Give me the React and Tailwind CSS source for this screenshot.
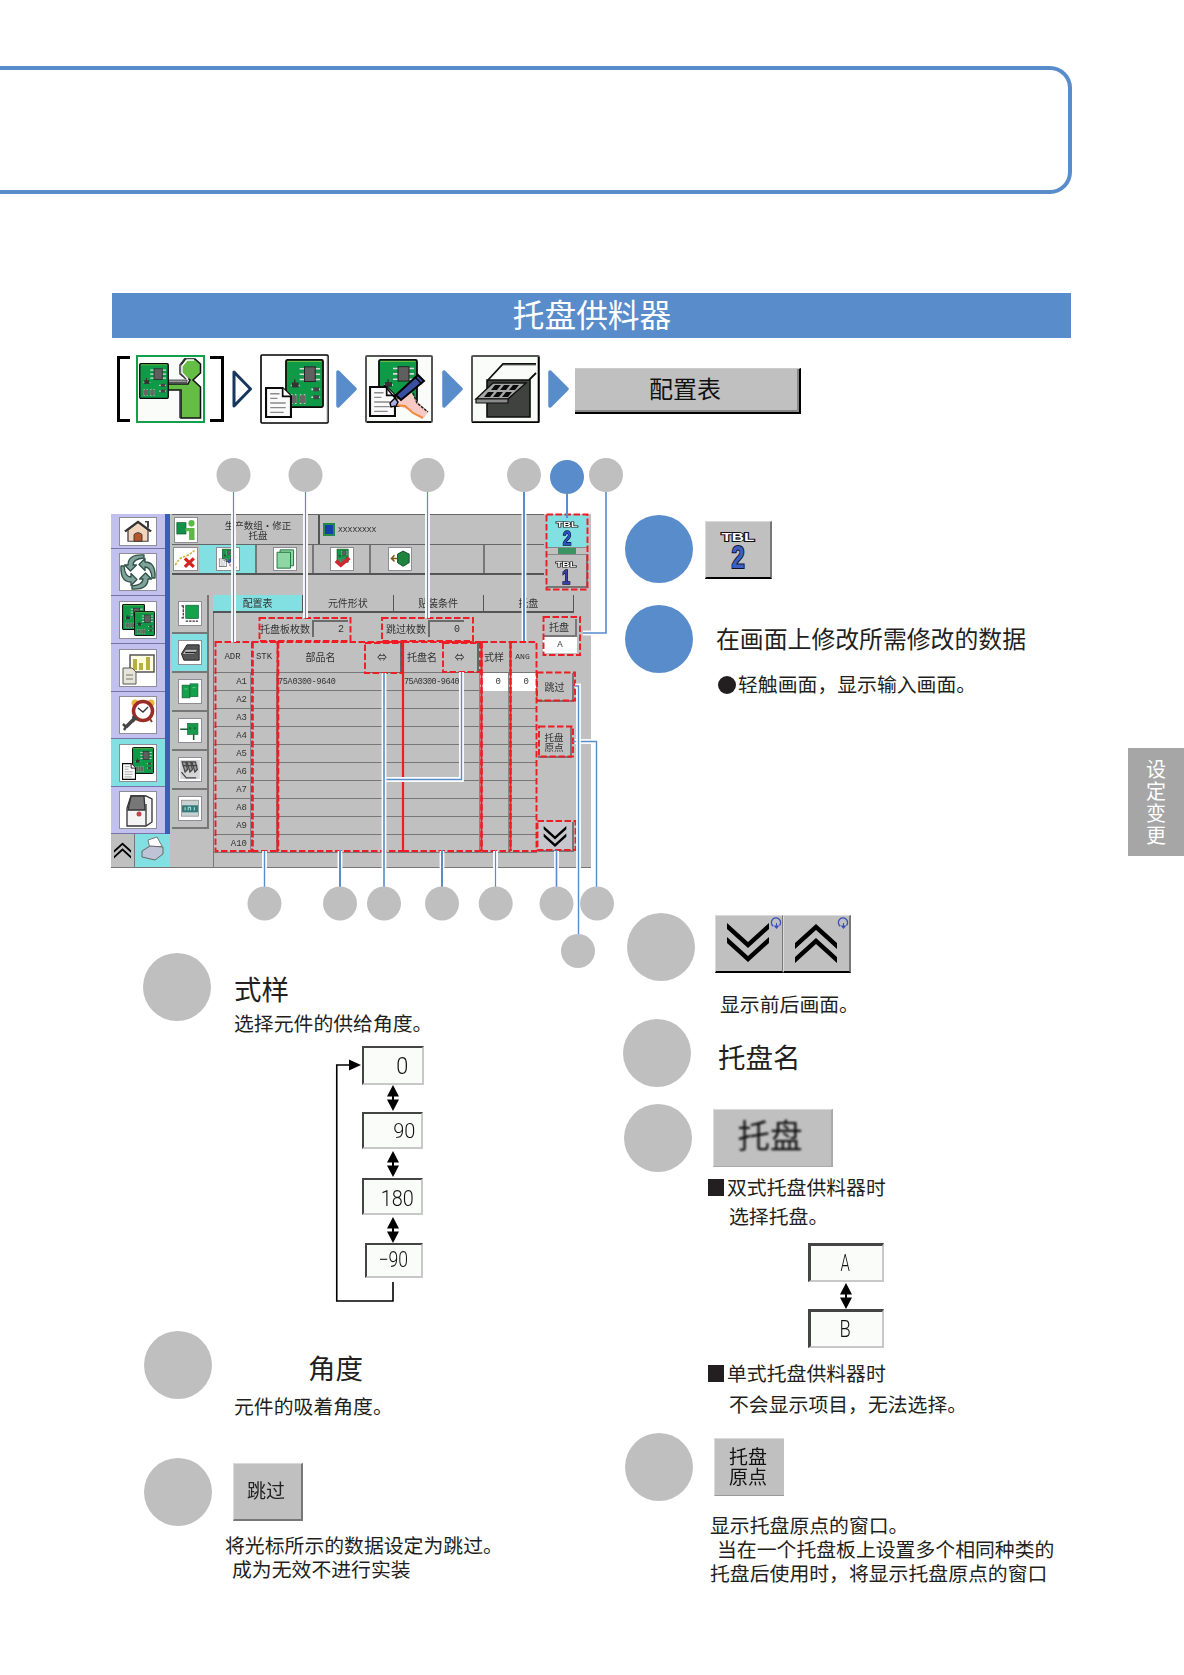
import React from 'react';
import clsx from 'clsx';

const RED = '#ee1c25';
const BLUE = '#588ccb';

/* ---------- icons ---------- */

// Green circuit board, drawn on a 40 x 50 grid
const Board = ({ x = 0, y = 0, w = 40, h = 50 }) => (
  <svg x={x} y={y} width={w} height={h} viewBox="0 0 40 50" preserveAspectRatio="none">
    <rect x="1" y="1" width="38" height="48" rx="1.5" fill="#0f9a48" stroke="#0a0a0a" strokeWidth="1.8" />
    <path d="M2.5 2.5h35" stroke="#7fbf3f" strokeWidth="1" />
    <g stroke="#d9d9d9" strokeWidth="1.6">
      <path d="M15 10h21M15 15.500h21M15 21h21" />
      <path d="M6 27h9M27 31h9M27 39h9" />
      <path d="M7 36v10M11 36v10M16 36v10M20 36v10" />
    </g>
    <rect x="20" y="8" width="11" height="15" fill="#5f5f5f" stroke="#222" />
    <rect x="7" y="24" width="7" height="5" fill="#333" />
    <path d="M10 21v4" stroke="#333" strokeWidth="1.5" />
    <rect x="29" y="29" width="6" height="4" fill="#444" />
    <rect x="29" y="37" width="6" height="4" fill="#444" />
    <rect x="6" y="37" width="6" height="8" fill="#666" />
    <rect x="15" y="37" width="6" height="8" fill="#666" />
  </svg>
);

const Sheet = ({ x = 0, y = 0, w = 26, h = 30 }) => (
  <svg x={x} y={y} width={w} height={h} viewBox="0 0 26 30" preserveAspectRatio="none">
    <path d="M1 1h16l8 8v20H1z" fill="#fafafa" stroke="#0a0a0a" strokeWidth="2" />
    <path d="M17 1v8h8" fill="#fff" stroke="#0a0a0a" strokeWidth="1.6" />
    <path d="M5 6.5h9M5 11h7M5 15.5h15M5 20h15M5 24.5h13" stroke="#8b8b8b" strokeWidth="1.3" />
  </svg>
);

const OperatorIcon = () => (
  <svg viewBox="0 0 69 68" className="h-[68px] w-[69px] shrink-0">
    <rect x="1" y="1" width="67" height="66" fill="#fafcfa" stroke="#12a04c" strokeWidth="2" />
    <path d="M32 25h19v2.500H32z" fill="#9a9a9a" stroke="#333" strokeWidth=".8" />
    <path
      d="M49 4h10l5.500 5v9l-7.500 7 7.500 7v31H45V35H32v-6h20l2-4-8-6V9z"
      fill="#66bd45"
      stroke="#111"
      strokeWidth="1.5"
    />
    <path d="M49 3.500L44 10v9l6 5M44 34v29" fill="none" stroke="#333" strokeWidth="1.5" />
    <path d="M58 5h-7l-5 6v7l6 6" fill="none" stroke="#fff" strokeWidth="1.6" />
    <Board x={3} y={8} w={30} h={36} />
  </svg>
);

const ProgramIcon = () => (
  <svg viewBox="0 0 69 70" className="h-[70px] w-[69px] shrink-0">
    <rect x="1" y="1" width="67" height="68" rx="1" fill="#fff" stroke="#000" strokeWidth="1.6" />
    <path d="M67 2v66" stroke="#bbb" />
    <Board x={25} y={5} w={39} h={49} />
    <Sheet x={5} y={33} w={27} h={31} />
  </svg>
);

const EditIcon = () => (
  <svg viewBox="0 0 68 68" className="h-[68px] w-[68px] shrink-0">
    <rect x="1" y="1" width="66" height="66" rx="1" fill="#fafcfa" stroke="#555" strokeWidth="2" />
    <path d="M2 67h64" stroke="#000" strokeWidth="1.5" />
    <Board x={13} y={4} w={40} h={48} />
    <Sheet x={4} y={31} w={27} h={31} />
    <path d="M30 46l16-9 6 9 11 11-4 6-14-8-15-5z" fill="#f9c9c4" />
    <path d="M29 50l11 1 8 7 10 5" fill="none" stroke="#f08a3c" strokeWidth="2" />
    <path d="M48 38l4 10 11 9" fill="none" stroke="#222" strokeWidth="1.5" strokeDasharray="3 1" />
    <path d="M53 20l6 6-23 19-5-5z" fill="#3a4fa2" stroke="#000" strokeWidth="2" />
    <path d="M50 22l7 7" stroke="#000" strokeWidth="1.5" />
    <path d="M30 43l3 4-2 4-5 1-1-4z" fill="#a9aede" stroke="#000" strokeWidth="1.4" />
    <path d="M19 30l11 13" stroke="#000" strokeWidth="1.4" />
  </svg>
);

const TrayIcon = () => (
  <svg viewBox="0 0 69 68" className="h-[68px] w-[69px] shrink-0">
    <rect x="1" y="1" width="67" height="66" rx="1" fill="#fafcfa" stroke="#555" strokeWidth="2" />
    <path d="M67.5 2v65.5H1" fill="none" stroke="#000" strokeWidth="1.6" />
    <path d="M17 25l15-16h33M58 25l7-7" fill="none" stroke="#111" strokeWidth="1.8" />
    <path d="M32 10h33" stroke="#777" strokeWidth="1" />
    <path d="M16 25h43v37H16z" fill="#3f423f" stroke="#0d0d0d" strokeWidth="1.6" />
    <path d="M22 28h33L37 44H5z" fill="#a7a7a7" stroke="#111" strokeWidth="1.4" />
    <path d="M5 44h32v4H5z" fill="#8a8a8a" stroke="#111" strokeWidth="1.2" />
    <g fill="#0a0a0a">
      <path d="M24 30h6l-4 5h-6zM33 30h6l-4 5h-6zM42 30h6l-4 5h-6z" />
      <path d="M17 37h6l-4 5h-6zM26 37h6l-4 5h-6zM35 37h6l-4 5h-6z" />
    </g>
  </svg>
);

const PathArrow = ({ outline }) => (
  <svg viewBox="0 0 21 38" className="h-[38px] w-[21px] shrink-0">
    {outline ? (
      <path d="M2 2v34L18.500 19z" fill="#fff" stroke="#17375e" strokeWidth="3" strokeLinejoin="round" />
    ) : (
      <path d="M2 2v34L19 19z" fill={BLUE} stroke={BLUE} strokeWidth="3.500" strokeLinejoin="round" />
    )}
  </svg>
);

const Chevrons = ({ up, className }) => (
  <svg viewBox="0 0 42 39" className={clsx(className, up && 'rotate-180')}>
    <path d="M0 0l21 19L42 0v6L21 25 0 6z" fill="#000" />
    <path d="M0 14l21 19L42 14v6L21 39 0 20z" fill="#000" />
  </svg>
);

const UpDown = () => (
  <svg viewBox="0 0 12 26" className="h-[26px] w-[12px]">
    <path d="M6 0l6 11.500H0zM6 26l6-11.500H0z" fill="#000" />
    <path d="M6 8v10" stroke="#000" strokeWidth="2" />
  </svg>
);

const TblLabel = ({ n, className, color = '#3f5fc0' }) => (
  <svg viewBox="0 0 68 58" className={className}>
    <text x="34" y="19" textAnchor="middle" textLength="35" lengthAdjust="spacingAndGlyphs" fontFamily="Liberation Sans, sans-serif" fontWeight="700" fontSize="12.500" fill="#fff" stroke="#111" strokeWidth="2" paintOrder="stroke">
      TBL
    </text>
    <text x="34" y="48" textAnchor="middle" textLength="14" lengthAdjust="spacingAndGlyphs" fontFamily="Liberation Sans, sans-serif" fontWeight="700" fontSize="33" fill={color} stroke="#0b1230" strokeWidth="2.200" paintOrder="stroke">
      {n}
    </text>
  </svg>
);

/* ---------- small machine-screen icons ---------- */

const HomeGlyph = () => (
  <g>
    <path d="M8 16v15h20V16L18 6z" fill="#f2d5bf" stroke="#444" strokeWidth="1.3" />
    <path d="M25 5h3v8" stroke="#444" strokeWidth="2" fill="none" />
    <path d="M5 18L18 5l13 13" fill="none" stroke="#333" strokeWidth="2.500" />
    <path d="M14 31v-9q4-5 8 0v9z" fill="#b5562c" stroke="#333" />
  </g>
);

const CycleGlyph = () => (
  <g fill="#7fa39a" stroke="#2f5049" strokeWidth="1.3" strokeLinejoin="round">
    {[0, 90, 180, 270].map((a) => (
      <path key={a} d="M24 1Q8 0 8 11H4.500l6 6 6-6H13Q13 5 24 4z" transform={`rotate(${a} 18 18)`} />
    ))}
  </g>
);

const BoardsGlyph = () => (
  <g>
    <Board x={2} y={2} w={23} h={26} />
    <Board x={14} y={9} w={21} h={25} />
  </g>
);

const ChartGlyph = () => (
  <g>
    <path d="M10 5h24v17H10z" fill="#fffce0" stroke="#555" strokeWidth="1.500" />
    <path d="M15 20V9M21 20v-7M28 20V7" stroke="#b7b040" strokeWidth="4" />
    <path d="M3 18h9l4 4v12H3z" fill="#e6e6d8" stroke="#555" />
    <path d="M6 25h7M6 29h7" stroke="#777" />
  </g>
);

const ClockGlyph = () => (
  <g>
    <circle cx="15" cy="6" r="3.500" fill="#e6b93c" />
    <circle cx="31" cy="6" r="3.500" fill="#e6b93c" />
    <circle cx="23" cy="14" r="9.500" fill="#fff" stroke="#9c2c26" strokeWidth="3.500" />
    <path d="M18 11l5 4 5-5" fill="none" stroke="#333" strokeWidth="1.400" />
    <path d="M30 22l2 3M15 22l-2 3" stroke="#9c2c26" strokeWidth="2" />
    <path d="M14 22L6 30" stroke="#444" strokeWidth="3.500" />
    <path d="M3 27l3 3-2 3M13 19l1 3 4 0" fill="none" stroke="#444" strokeWidth="2.500" />
  </g>
);

const DataGlyph = () => (
  <g>
    <Board x={12} y={2} w={22} h={27} />
    <Sheet x={2} y={18} w={14} h={17} />
  </g>
);

const MachineGlyph = () => (
  <g fill="#f4f4f4" stroke="#333" strokeWidth="1.300">
    <path d="M11 4h15l6 3v23l-6 4H7V16z" />
    <path d="M11 4h13l1 14H8z" fill="#777" />
    <path d="M26 12v21" />
    <circle cx="19" cy="22" r="2.500" fill="#c2454d" stroke="none" />
  </g>
);

const BoardSizeGlyph = () => (
  <g>
    <rect x="11" y="5" width="21" height="21" fill="#15a04c" stroke="#145c33" />
    <path d="M7 6v19M11 30h20M4 6h5M4 25h5" stroke="#333" strokeWidth="2" strokeDasharray="4 1.500" />
  </g>
);

const PairGlyph = () => (
  <g fill="#15a04c" stroke="#145c33">
    <rect x="5" y="8" width="13" height="20" />
    <rect x="18" y="6" width="13" height="20" />
    <path d="M9 14h5M22 12h5" stroke="#9be0b0" />
  </g>
);

const TrayGlyph = () => (
  <g>
    <path d="M4 20L13 6h20v24H8z" fill="#555" stroke="#222" strokeWidth="1.500" />
    <path d="M5 21l6-8h20l-6 8z" fill="#bbb" stroke="#222" />
    <path d="M10 18h17" stroke="#222" strokeWidth="2" />
  </g>
);

const PinGlyph = () => (
  <g>
    <rect x="14" y="7" width="17" height="17" fill="#169a49" stroke="#145c33" />
    <path d="M2 16h13M24 24v9M18 13v3M26 13v3" stroke="#145c33" strokeWidth="2.500" />
  </g>
);

const FeederGlyph = () => (
  <g fill="none" stroke="#444" strokeWidth="2">
    <rect x="2" y="3" width="32" height="30" fill="#d5d5d5" stroke="none" />
    <path d="M5 6h6l3 12-4 4zM13 6h6l3 12-4 4zM21 6h6l3 12-4 4z" fill="#999" />
    <path d="M4 22l8 9h16M6 12h24" />
  </g>
);

const MeterGlyph = () => (
  <g>
    <rect x="4" y="5" width="28" height="25" fill="#c9d2d2" stroke="#777" />
    <rect x="5" y="13" width="26" height="11" fill="#327a7a" />
    <path d="M10 21v-5M15 21v-5h4v5M25 16v5" stroke="#bdf1ef" strokeWidth="1.500" fill="none" />
  </g>
);

const UserGlyph = () => (
  <g>
    <rect x="3" y="7" width="15" height="17" fill="#13904a" stroke="#0c4f2a" />
    <circle cx="27" cy="8" r="5" fill="#5cb848" />
    <path d="M17 15h15v18h-9V20h-6z" fill="#5cb848" />
  </g>
);

const DeleteGlyph = () => (
  <g>
    <path d="M2 28q6-12 14-14T32 4" fill="none" stroke="#c9b03e" strokeWidth="2.500" strokeDasharray="4 2" />
    <path d="M17 17l14 14M31 17L17 31" stroke="#d32424" strokeWidth="5" />
  </g>
);

const EditGlyph = () => (
  <g>
    <Board x={8} y={1} w={18} h={22} />
    <Sheet x={3} y={17} w={13} h={14} />
    <path d="M18 24l12-10" stroke="#3a4fa2" strokeWidth="5" />
    <path d="M20 27l12 6" stroke="#d8a090" strokeWidth="4" />
  </g>
);

const PagesGlyph = () => (
  <g fill="#8fd6a5" stroke="#23763f" strokeWidth="1.600">
    <path d="M10 3h22v26H10z" />
    <path d="M5 7h22v26H5z" />
  </g>
);

const CheckGlyph = () => (
  <g>
    <Board x={9} y={1} w={20} h={23} />
    <path d="M8 21l8 7 14-12" fill="none" stroke="#cf2630" strokeWidth="6" />
  </g>
);

const OutputGlyph = () => (
  <g>
    <path d="M14 10l9-5 10 5v14l-10 6-9-6z" fill="#1f8340" stroke="#114a25" strokeWidth="1.500" />
    <path d="M14 17H4M9 12l-5 5 5 5" fill="none" stroke="#7b5a1c" strokeWidth="2.500" />
  </g>
);

const Tile = ({ children, className }) => (
  <div className={clsx('shrink-0 border border-[#8d8d93] bg-white', className)}>
    <svg viewBox="0 0 36 36" preserveAspectRatio="none" className="h-full w-full">
      {children}
    </svg>
  </div>
);

/* ---------- machine screen ---------- */

const MENU = [
  { glyph: <HomeGlyph />, h: 'h-[35px]', tile: 'h-[29px]' },
  { glyph: <CycleGlyph />, h: 'h-[47px]', tile: 'h-[38px]' },
  { glyph: <BoardsGlyph />, h: 'h-[48px]', tile: 'h-[38px]' },
  { glyph: <ChartGlyph />, h: 'h-[48px]', tile: 'h-[38px]' },
  { glyph: <ClockGlyph />, h: 'h-[47px]', tile: 'h-[38px]' },
  { glyph: <DataGlyph />, h: 'h-[48px]', tile: 'h-[38px]', active: true },
  { glyph: <MachineGlyph />, h: 'h-[47px]', tile: 'h-[38px]' },
];

const SUBMENU = [
  { glyph: <BoardSizeGlyph /> },
  { glyph: <TrayGlyph />, active: true },
  { glyph: <PairGlyph /> },
  { glyph: <PinGlyph /> },
  { glyph: <FeederGlyph /> },
  { glyph: <MeterGlyph /> },
];

const TOOLS = [
  { glyph: <EditGlyph />, active: true, w: 'w-[57px]' },
  { glyph: <PagesGlyph />, w: 'w-[57px]' },
  { glyph: <CheckGlyph />, w: 'w-[57px]' },
  { glyph: <OutputGlyph />, w: 'w-[114px]', pad: 'pr-[54px]' },
];

const TABS = ['配置表', '元件形状', '贴装条件', '托盘'];
const ROWS = ['A1', 'A2', 'A3', 'A4', 'A5', 'A6', 'A7', 'A8', 'A9', 'A10'];
const COLS = 'grid grid-cols-[37px_26px_87px_38px_40px_37px_30px_27px]';

const CountField = ({ label, value }) => (
  <div className="flex h-[20px] items-center">
    <span className="whitespace-nowrap">{label}</span>
    <span className="ml-[2px] h-[17px] w-[36px] border-t-2 border-l-2 border-[#6b6b6b] pr-[4px] text-right font-['Liberation_Mono',monospace] leading-[16px]">
      {value}
    </span>
  </div>
);

const MachineScreen = () => (
  <div className="flex h-[354px] w-[480px] overflow-hidden border-b border-[#777] bg-[#c0c0c0] font-['Noto_Sans_CJK_SC',sans-serif] text-[10px] text-[#333] blur-[0.6px]">
    <div className="flex w-[59px] flex-col">
      <div className="flex flex-col border-r-[5px] border-[#3b5cb8] bg-[#c1c0ef]">
        {MENU.map((m, i) => (
          <div key={i} className={clsx('flex items-center justify-center border-b border-[#7674a8]', m.h, m.active && 'bg-[#83e0e2]')}>
            <Tile className={clsx('w-[38px]', m.tile)}>{m.glyph}</Tile>
          </div>
        ))}
      </div>
      <div className="flex flex-1 bg-[#83e0e2]">
        <div className="flex w-[24px] items-center justify-center border-r border-[#777] bg-[#c0c0c0]">
          <Chevrons up className="h-[17px] w-[17px]" />
        </div>
        <svg viewBox="0 0 34 32" className="h-[32px] w-[34px]">
          <path d="M13 6l9-3 5 9-12 3z" fill="#fff" stroke="#777" />
          <path d="M7 17l8-5 13 1v7l-8 6-13-3z" fill="#bfc3d6" stroke="#666" />
        </svg>
      </div>
    </div>

    <div className="ml-[2px] flex w-[419px] flex-col">
      <div className="flex h-[61px]">
        <div className="flex w-[372px] flex-col border-b-2 border-[#555]">
          <div className="flex h-[31px] border-t border-b border-[#666]">
            <Tile className="mt-[2px] ml-[2px] h-[26px] w-[24px]"><UserGlyph /></Tile>
            <div className="flex w-[122px] flex-col items-center justify-center border-r-2 border-[#555] text-[9.500px] leading-[10px]">
              <span>生产数组·修正</span>
              <span>托盘</span>
            </div>
            <div className="flex items-center gap-[3px] pl-[3px]">
              <span className="h-[13px] w-[12px] border-2 border-[#25884d] bg-[#173fa8]" />
              <span className="font-['Liberation_Mono',monospace] text-[8px]">XXXXXXXX</span>
            </div>
          </div>
          <div className="flex flex-1">
            <Tile className="mt-[2px] ml-[1px] h-[24px] w-[25px]"><DeleteGlyph /></Tile>
            <div className="ml-[2px] flex">
              {TOOLS.map((t, i) => (
                <div key={i} className={clsx('flex items-center justify-center border-r-2 border-[#777]', t.w, t.pad, t.active && 'bg-[#83e0e2]')}>
                  <Tile className="h-[24px] w-[24px]">{t.glyph}</Tile>
                </div>
              ))}
            </div>
          </div>
        </div>
        <div className="ml-[2px] flex w-[42px] flex-col pt-[1px]">
          <div className="flex h-[32px] justify-center bg-[#83e0e2]">
            <TblLabel n="2" color="#2b53c0" className="h-[36px] w-[42px]" />
          </div>
          <div className="flex h-[10px] items-center justify-center border-y border-[#888]">
            <span className="h-[6px] w-[18px] bg-[#3a9361]" />
          </div>
          <div className="flex h-[33px] shrink-0 justify-center border-r-2 border-b-2 border-[#777]">
            <TblLabel n="1" color="#3b3fa8" className="h-[36px] w-[42px]" />
          </div>
        </div>
      </div>

      <div className="mt-[20px] flex flex-1">
        <div className="flex w-[37px] flex-col">
          {SUBMENU.map((s, i) => (
            <div key={i} className={clsx('flex h-[39px] items-center justify-center border-r-2 border-b-2 border-[#777]', s.active && 'bg-[#83e0e2]')}>
              <Tile className="h-[25px] w-[24px]">{s.glyph}</Tile>
            </div>
          ))}
        </div>
        <div className="ml-[4px] flex flex-col">
          <div className="flex h-[18px] w-[361px]">
            {TABS.map((t, i) => (
              <div key={t} className={clsx('flex-1 border-r border-b-2 border-[#555] text-center leading-[16px]', i === 0 && 'border-b-0 bg-[#83e0e2]')}>
                {t}
              </div>
            ))}
          </div>
          <div className="flex flex-1 border-l border-[#777]">
            <div className="flex w-[323px] flex-col">
              <div className="flex h-[29px] items-center gap-[38px] pt-[2px] pl-[46px]">
                <CountField label="托盘板枚数" value="2" />
                <CountField label="跳过枚数" value="0" />
              </div>
              <div className={clsx(COLS, 'h-[31px] border-b border-[#777] text-center leading-[30px]')}>
                <span className="font-['Liberation_Mono',monospace] text-[9px]">ADR</span>
                <span className="font-['Liberation_Mono',monospace] text-[9px]">STK</span>
                <span>部品名</span>
                <span className="border-r-2 border-b border-[#666]">⇔</span>
                <span>托盘名</span>
                <span className="border-r-2 border-b border-[#666]">⇔</span>
                <span>式样</span>
                <span className="font-['Liberation_Mono',monospace] text-[8px]">ANG</span>
              </div>
              {ROWS.map((r, i) => (
                <div key={r} className={clsx(COLS, "h-[18px] border-b border-[#777] font-['Liberation_Mono',monospace] text-[9px] leading-[18px]")}>
                  <span className="border-r border-[#888] pr-[3px] text-right">{r}</span>
                  <span className="border-r border-[#888]" />
                  <span className="col-span-2 pl-[1px] text-[8.500px] tracking-[-0.3px]">{i === 0 && '75A0300-9640'}</span>
                  <span className="col-span-2 pl-[2px] text-[8.500px] tracking-[-0.5px] whitespace-nowrap">{i === 0 && '75A0300-9640'}</span>
                  <span className={clsx('border-x border-[#888] pr-[7px] text-right', i === 0 && 'bg-white')}>{i === 0 && '0'}</span>
                  <span className={clsx('pr-[7px] text-right', i === 0 && 'bg-white')}>{i === 0 && '0'}</span>
                </div>
              ))}
            </div>
            <div className="flex w-[42px] flex-col items-start">
              <div className="mt-[6px] ml-[6px] h-[18px] w-[34px] border-r-2 border-b-2 border-[#777] text-center leading-[16px]">托盘</div>
              <div className="ml-[6px] h-[16px] w-[34px] bg-white text-center font-['Liberation_Mono',monospace] text-[9px] leading-[16px]">A</div>
              <div className="mt-[20px] h-[29px] w-[37px] border-r-2 border-b-2 border-[#777] text-center leading-[27px]">跳过</div>
              <div className="mt-[25px] ml-[1px] flex h-[31px] w-[34px] flex-col justify-center border-r-2 border-b-2 border-[#777] text-center text-[9.500px] leading-[10px]">
                <span>托盘</span>
                <span>原点</span>
              </div>
              <div className="mt-[64px] ml-[1px] flex h-[30px] w-[36px] items-center justify-center border-r-2 border-b-2 border-[#777] bg-[#c6c6cc]">
                <Chevrons className="h-[21px] w-[24px]" />
              </div>
            </div>
          </div>
        </div>
      </div>
    </div>
  </div>
);

/* ---------- callouts over the machine screen ---------- */

// Marker bubbles, in page coordinates
const MARKERS = [
  [233.5, 475], [305.5, 475], [427.5, 475], [524, 475], [606, 475],
  [264.5, 903.5], [340, 903.5], [384, 903.5], [442, 903.5], [495.7, 903.5], [556.5, 903.5], [597, 903.5],
  [578, 951],
];

const LEADERS = [
  { d: 'M233.5 492V642', halo: 'M233.5 514V642', w: 1.2 },
  { d: 'M305.5 492V618', halo: 'M305.5 514V618', w: 1.2 },
  { d: 'M427.5 492V618', halo: 'M427.5 514V618', w: 1.2 },
  { d: 'M524 492V641', halo: 'M524 514V641', w: 2 },
  { d: 'M567 494V518', w: 2 },
  { d: 'M606 492V633H583', halo: 'M591 633H583', w: 1.6 },
  { d: 'M461.5 672V779.500H384', halo: 'M461.5 672V779.500H384', w: 1.4 },
  { d: 'M384 673V887', halo: 'M384 673V868', w: 1.6 },
  { d: 'M264.5 851V887', halo: 'M264.5 851V868', w: 1.4 },
  { d: 'M340 850V887', halo: 'M340 851V868', w: 2 },
  { d: 'M442 850V887', halo: 'M442 851V868', w: 2 },
  { d: 'M495.5 850V887', halo: 'M495.5 851V868', w: 1.2 },
  { d: 'M556.500 850V887', halo: 'M556.500 851V868', w: 1.6 },
  { d: 'M573 741.500H596.500V887', halo: 'M575 741.500H591', w: 1.4 },
  { d: 'M575 686H578.500V934', halo: 'M575 686H578.500V868', w: 1.4 },
];

const FRAMES = [
  [259.5, 618, 91, 23],
  [382, 618, 91, 23],
  [215.500, 642, 36.500, 209],
  [277.500, 642, 125.500, 209],
  [403, 642, 78.500, 209],
  [510.500, 642, 26, 209],
  [365, 643, 37, 30],
  [443, 643, 37, 29],
  [546.5, 514.5, 41, 75],
  [543.5, 617, 36.5, 38],
  [537, 672.500, 38, 28],
  [539, 726.500, 34, 30],
  [537.500, 821, 38, 29],
];

const Callouts = () => (
  <svg viewBox="0 424 624 546" className="absolute top-0 left-0 h-[546px] w-[624px]" fill="none">
    <g stroke={RED} strokeWidth="1.9" strokeDasharray="6.500 2.500">
      {FRAMES.map(([x, y, w, h], i) => (
        <rect key={i} x={x} y={y} width={w} height={h} />
      ))}
      <path d="M252 642H277.500M252 851H277.500M481.500 642H510.500M481.500 851H510.500" />
      <path d="M252.500 642V851M278 642V851M481.500 642V851M510.500 642V851" strokeWidth="2.600" />
    </g>
    <path d="M403 642V851" stroke={RED} strokeWidth="2.200" />
    {LEADERS.map((l) => (
      <g key={l.d}>
        {l.halo && <path d={l.halo} stroke="#fff" strokeWidth="4.800" />}
        <path d={l.d} stroke={BLUE} strokeWidth={l.w} />
      </g>
    ))}
    {MARKERS.map(([x, y]) => (
      <circle key={`${x}-${y}`} cx={x} cy={y} r="17" fill="#bfbfbf" />
    ))}
    <circle cx="567" cy="477" r="17" fill={BLUE} />
  </svg>
);

/* ---------- page parts ---------- */

const Dot = ({ blue, className }) => (
  <div className={clsx('h-[68px] w-[68px] shrink-0 rounded-full', blue ? 'bg-[#588ccb]' : 'bg-[#bfbfbf]', className)} />
);

const Heading = ({ children, className }) => (
  <h3 className={clsx('h-[28px] text-[27.500px] leading-[28px] whitespace-nowrap', className)}>{children}</h3>
);

const Line = ({ children, className }) => (
  <p className={clsx('h-[20px] text-[19.850px] leading-[20px] whitespace-pre', className)}>{children}</p>
);

const ValueBox = ({ children, className }) => (
  <div
    className={clsx(
      "flex items-center border-t-2 border-r-2 border-b-2 border-l-2 border-t-[#444] border-r-[#c8c8c8] border-b-[#c8c8c8] border-l-[#444] bg-[#fafcfa] font-['Roboto',sans-serif] font-light text-[#111]",
      className
    )}
  >
    {children}
  </div>
);

const KeyButton = ({ children, className }) => (
  <div className={clsx('flex h-[58px] items-center justify-center border-t border-l border-[#dadada] bg-[#c0c0c0]', className)}>{children}</div>
);

const AngleCycle = () => (
  <div className="relative ml-[103px] flex h-[258px] w-[90px] flex-col">
    <svg viewBox="0 0 90 258" className="absolute inset-0 h-[258px] w-[90px] overflow-visible">
      <path d="M56 236v19H-0.250V19H14" fill="none" stroke="#000" strokeWidth="1.600" />
      <path d="M12 13.500v11L24 19z" fill="#000" />
    </svg>
    <ValueBox className="ml-[25px] h-[39px] w-[62px] justify-end pr-[14px] text-[24px]">
      <span className="origin-right scale-x-90">0</span>
    </ValueBox>
    <div className="ml-[50px]"><UpDown /></div>
    <ValueBox className="mt-[1px] ml-[25px] h-[37px] w-[61px] justify-end pt-[3px] pr-[6px] text-[21px]">
      <span className="origin-right scale-x-95">90</span>
    </ValueBox>
    <div className="mt-[2px] ml-[50px]"><UpDown /></div>
    <ValueBox className="mt-[1px] ml-[25px] h-[37px] w-[61px] justify-end pt-[3px] pr-[7px] text-[22px]">
      <span className="origin-right scale-x-90">180</span>
    </ValueBox>
    <div className="mt-[2px] ml-[50px]"><UpDown /></div>
    <ValueBox className="ml-[28px] h-[35px] w-[58px] justify-end pr-[13px] pb-[2px] text-[22px]">
      <span className="origin-right scale-x-[0.8]">−90</span>
    </ValueBox>
  </div>
);

const LoopMark = () => (
  <svg viewBox="0 0 12 14" className="absolute top-[1px] right-0 h-[14px] w-[12px]">
    <path d="M3.200 9.200A4.600 4.600 0 1 1 9.500 8.500" fill="none" stroke="#3a50b4" strokeWidth="1.300" />
    <path d="M3.500 8.500h6L6.500 12z" fill="#3a50b4" />
    <path d="M6.500 6v4" stroke="#3a50b4" />
  </svg>
);

export default function App() {
  return (
    <div className="h-[1675px] w-[1184px] overflow-hidden bg-white pt-[66px] font-['Noto_Sans_CJK_SC',sans-serif] text-[#231f20]">
      <header className="h-[128px] w-[1072px] rounded-r-[22px] border-4 border-l-0 border-[#588ccb]" />

      <h2 className="mt-[99px] ml-[112px] flex h-[45px] w-[959px] items-center justify-center bg-[#588ccb] pb-[3px] pl-[1px] text-[31.700px] leading-none text-white">
        托盘供料器
      </h2>

      {/* Button path to reach the screen */}
      <nav className="mt-[16px] flex h-[70px] items-center pl-[117px]">
        <span className="h-[66px] w-[13px] border-[3px] border-r-0 border-black" />
        <div className="ml-[6px]"><OperatorIcon /></div>
        <span className="ml-[5px] h-[66px] w-[14px] border-[3px] border-l-0 border-black" />
        <div className="ml-[8px]"><PathArrow outline /></div>
        <div className="ml-[7px]"><ProgramIcon /></div>
        <div className="ml-[7px]"><PathArrow /></div>
        <div className="ml-[8px]"><EditIcon /></div>
        <div className="ml-[9px]"><PathArrow /></div>
        <div className="ml-[8px]"><TrayIcon /></div>
        <div className="ml-[8px]"><PathArrow /></div>
        <div className="mt-[4px] ml-[6px] flex h-[46px] w-[226px] items-center justify-center border-t border-r-2 border-b-2 border-t-[#ccc] border-r-black border-b-black bg-[#c0c0c0] pr-[4px] pb-[6px] text-[24px] leading-none text-[#111] shadow-[inset_-2px_-2px_0_#888]">
          配置表
        </div>
      </nav>

      <main className="flex">
        <div className="flex w-[624px] flex-col">
          <div className="relative h-[529px] pt-[90px] pl-[111px]">
            <MachineScreen />
            <Callouts />
          </div>

          <section className="flex h-[378px] pl-[143px]">
            <Dot />
            <div className="ml-[23px] pt-[21px]">
              <Heading>式样</Heading>
              <Line className="mt-[11px]">选择元件的供给角度。</Line>
              <div className="mt-[13px]">
                <AngleCycle />
              </div>
            </div>
          </section>

          <section className="flex h-[127px] pl-[144px]">
            <Dot />
            <div className="ml-[22px] pt-[22px]">
              <Heading className="ml-[74px]">角度</Heading>
              <Line className="mt-[15px]">元件的吸着角度。</Line>
            </div>
          </section>

          <section className="flex pl-[144px]">
            <Dot />
            <div className="ml-[13px] pt-[5px]">
              <KeyButton className="ml-[8px] w-[70px] border-r-2 border-b-2 border-r-[#777] border-b-[#777] pr-[3px] pb-[4px] text-[19px] leading-none text-[#222]">
                <span className="blur-[0.5px]">跳过</span>
              </KeyButton>
              <Line className="mt-[14px]">将光标所示的数据设定为跳过。</Line>
              <Line className="mt-[4px] ml-[7px]">成为无效不进行实装</Line>
            </div>
          </section>
        </div>

        <div className="flex w-[504px] flex-col pt-[91px]">
          <section className="flex h-[90px] pl-[1px]">
            <Dot blue />
            <KeyButton className="mt-[6px] ml-[12px] w-[67px] border-r-2 border-b-2 border-r-[#777] border-b-black">
              <TblLabel n="2" className="h-[58px] w-[68px]" />
            </KeyButton>
          </section>

          <section className="flex h-[308px] pl-[1px]">
            <Dot blue />
            <div className="ml-[23px] pt-[21px]">
              <p className="h-[24px] text-[23.850px] leading-[24px] whitespace-nowrap">在画面上修改所需修改的数据</p>
              <div className="mt-[24px] ml-[2px] flex items-center">
                <span className="mt-[1px] mr-[2px] h-[18px] w-[18px] rounded-full bg-[#231f20]" />
                <Line>轻触画面，显示输入画面。</Line>
              </div>
            </div>
          </section>

          <section className="flex h-[106px] pl-[3px]">
            <Dot />
            <div className="ml-[20px] pt-[2px]">
              <div className="flex">
                <KeyButton className="relative w-[68px] border-r border-b-2 border-r-[#777] border-b-black pr-[2px] pb-[2px]">
                  <Chevrons className="h-[39px] w-[42px]" />
                  <LoopMark />
                </KeyButton>
                <KeyButton className="relative w-[68px] border-r-2 border-b-2 border-r-[#777] border-b-black pr-[2px]">
                  <Chevrons up className="h-[39px] w-[42px]" />
                  <LoopMark />
                </KeyButton>
              </div>
              <Line className="mt-[21px] ml-[5px]">显示前后画面。</Line>
            </div>
          </section>

          <section className="flex h-[85px]">
            <Dot className="-ml-px" />
            <Heading className="mt-[23px] ml-[27px]">托盘名</Heading>
          </section>

          <section className="flex h-[329px]">
            <Dot />
            <div className="ml-[16px] pt-[5px]">
              <KeyButton className="ml-[5px] w-[120px] border-r-2 border-b border-r-[#aaa] border-b-[#aaa] pr-[5px] pb-[8px] text-[32.500px] leading-none text-[#111]">
                <span className="blur-[0.9px]">托盘</span>
              </KeyButton>
              <div className="mt-[10px] flex items-center">
                <span className="mt-[1px] mr-[3px] h-[17px] w-[16px] bg-[#231f20]" />
                <Line>双式托盘供料器时</Line>
              </div>
              <Line className="mt-[9px] ml-[21px]">选择托盘。</Line>
              <div className="mt-[17px] ml-[100px] flex w-[76px] flex-col items-center">
                <ValueBox className="h-[39px] w-[76px] justify-center border-t-[3px] border-l-[3px] pt-[2px] pr-[2px] text-[23px]">
                  <span className="scale-x-[0.65]">A</span>
                </ValueBox>
                <div className="mt-[1px]"><UpDown /></div>
                <ValueBox className="h-[39px] w-[76px] justify-center border-t-[3px] border-l-[3px] pt-[3px] pr-[2px] text-[23px]">
                  <span className="scale-x-[0.8]">B</span>
                </ValueBox>
              </div>
              <div className="mt-[15px] flex items-center">
                <span className="mt-[1px] mr-[3px] h-[17px] w-[16px] bg-[#231f20]" />
                <Line>单式托盘供料器时</Line>
              </div>
              <Line className="mt-[11px] ml-[21px]">不会显示项目，无法选择。</Line>
            </div>
          </section>

          <section className="flex pl-[1px]">
            <Dot />
            <div className="ml-[17px] pt-[5px]">
              <KeyButton className="ml-[4px] w-[70px] flex-col border-b border-b-[#999] pr-[3px] pb-[2px] text-[19px] leading-[20px] text-[#111]">
                <span className="blur-[0.7px]">托盘</span>
                <span className="blur-[0.7px]">原点</span>
              </KeyButton>
              <Line className="mt-[19px]">显示托盘原点的窗口。</Line>
              <Line className="mt-[4px] ml-[7px]">当在一个托盘板上设置多个相同种类的</Line>
              <Line className="mt-[4px]">托盘后使用时，将显示托盘原点的窗口</Line>
            </div>
          </section>
        </div>

        {/* Chapter tab on the page edge */}
        <aside className="mt-[324px] flex h-[108px] w-[56px] flex-col items-center justify-center bg-[#a6a6a6] text-[20px] leading-[22px] text-white">
          {['设', '定', '变', '更'].map((c) => (
            <span key={c}>{c}</span>
          ))}
        </aside>
      </main>
    </div>
  );
}
